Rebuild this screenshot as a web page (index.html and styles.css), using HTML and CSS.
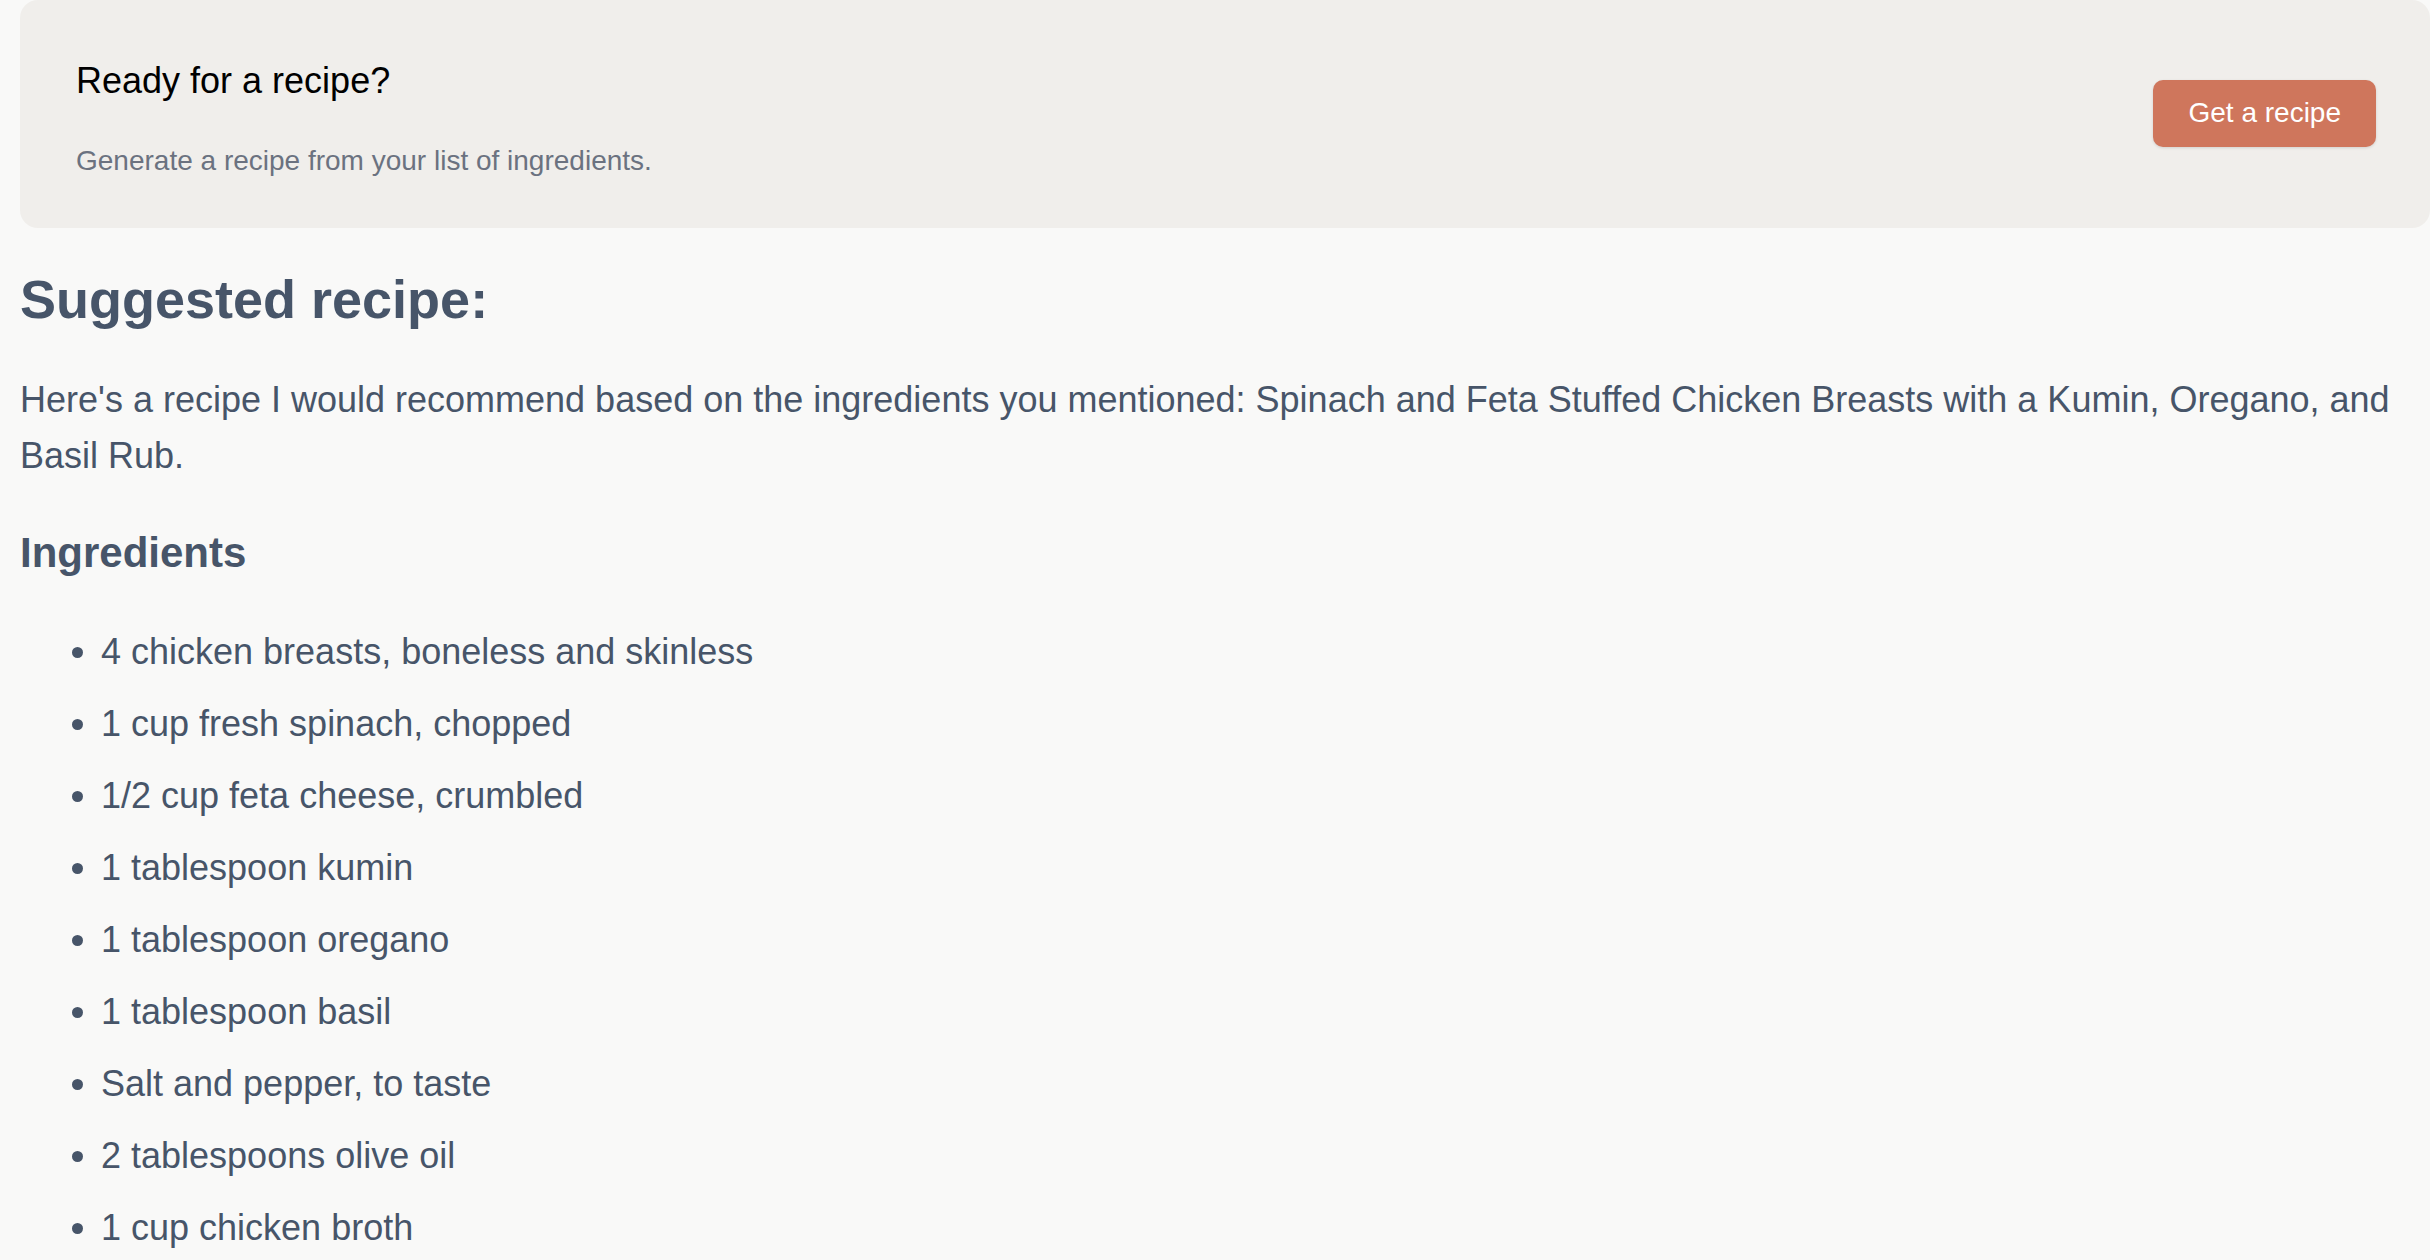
FILE: index.html
```html
<!DOCTYPE html>
<html lang="en">
<head>
<meta charset="utf-8">
<title>Recipe</title>
<link rel="stylesheet" href="styles.css">
</head>
<body>
<div class="page">
  <section class="banner">
    <div class="banner-text">
      <h2 class="banner-title">Ready for a recipe?</h2>
      <p class="banner-sub">Generate a recipe from your list of ingredients.</p>
    </div>
    <button class="btn" type="button">Get a recipe</button>
  </section>
  <main class="recipe">
    <h1 class="recipe-title">Suggested recipe:</h1>
    <p class="recipe-intro">Here's a recipe I would recommend based on the ingredients you mentioned: Spinach and Feta Stuffed Chicken Breasts with a Kumin, Oregano, and Basil Rub.</p>
    <h2 class="recipe-sub">Ingredients</h2>
    <ul class="ingredients">
      <li>4 chicken breasts, boneless and skinless</li>
      <li>1 cup fresh spinach, chopped</li>
      <li>1/2 cup feta cheese, crumbled</li>
      <li>1 tablespoon kumin</li>
      <li>1 tablespoon oregano</li>
      <li>1 tablespoon basil</li>
      <li>Salt and pepper, to taste</li>
      <li>2 tablespoons olive oil</li>
      <li>1 cup chicken broth</li>
    </ul>
  </main>
</div>
</body>
</html>
```

FILE: styles.css
```css
html, body {
  margin: 0;
  padding: 0;
  background: #f9f9f8;
}
body {
  font-family: "Liberation Sans", Arial, Helvetica, sans-serif;
  color: #475569;
}
.page {
  padding-left: 20px;
}
.banner {
  display: flex;
  align-items: center;
  justify-content: space-between;
  background: #f0eeeb;
  border-radius: 18px;
  padding: 54px 56px 46px 56px;
}
.banner-text {
  display: flex;
  flex-direction: column;
}
.banner-title {
  margin: 0;
  font-size: 36px;
  line-height: 54px;
  font-weight: 400;
  color: #000;
}
.banner-sub {
  margin: 32px 0 0 0;
  font-size: 28px;
  line-height: 42px;
  color: #6b7280;
}
.btn {
  font-family: inherit;
  font-size: 28px;
  color: #ffffff;
  background: #cf765c;
  border: none;
  border-radius: 10px;
  height: 67px;
  padding: 0 35px;
  box-shadow: 0 1px 3px rgba(0, 0, 0, 0.12);
  margin-right: -2px;
  margin-bottom: 10px;
}
.recipe {
  padding-right: 20px;
}
.recipe-title {
  margin: 37px 0 0 0;
  font-size: 54px;
  line-height: 68px;
  font-weight: 700;
}
.recipe-intro {
  margin: 39px 0 0 0;
  font-size: 36px;
  line-height: 56px;
}
.recipe-sub {
  margin: 41px 0 0 0;
  font-size: 42px;
  line-height: 56px;
  font-weight: 700;
}
.ingredients {
  margin: 43px 0 0 0;
  padding-left: 81px;
  font-size: 36px;
  line-height: 56px;
}
.ingredients li {
  margin-bottom: 16px;
}
```
